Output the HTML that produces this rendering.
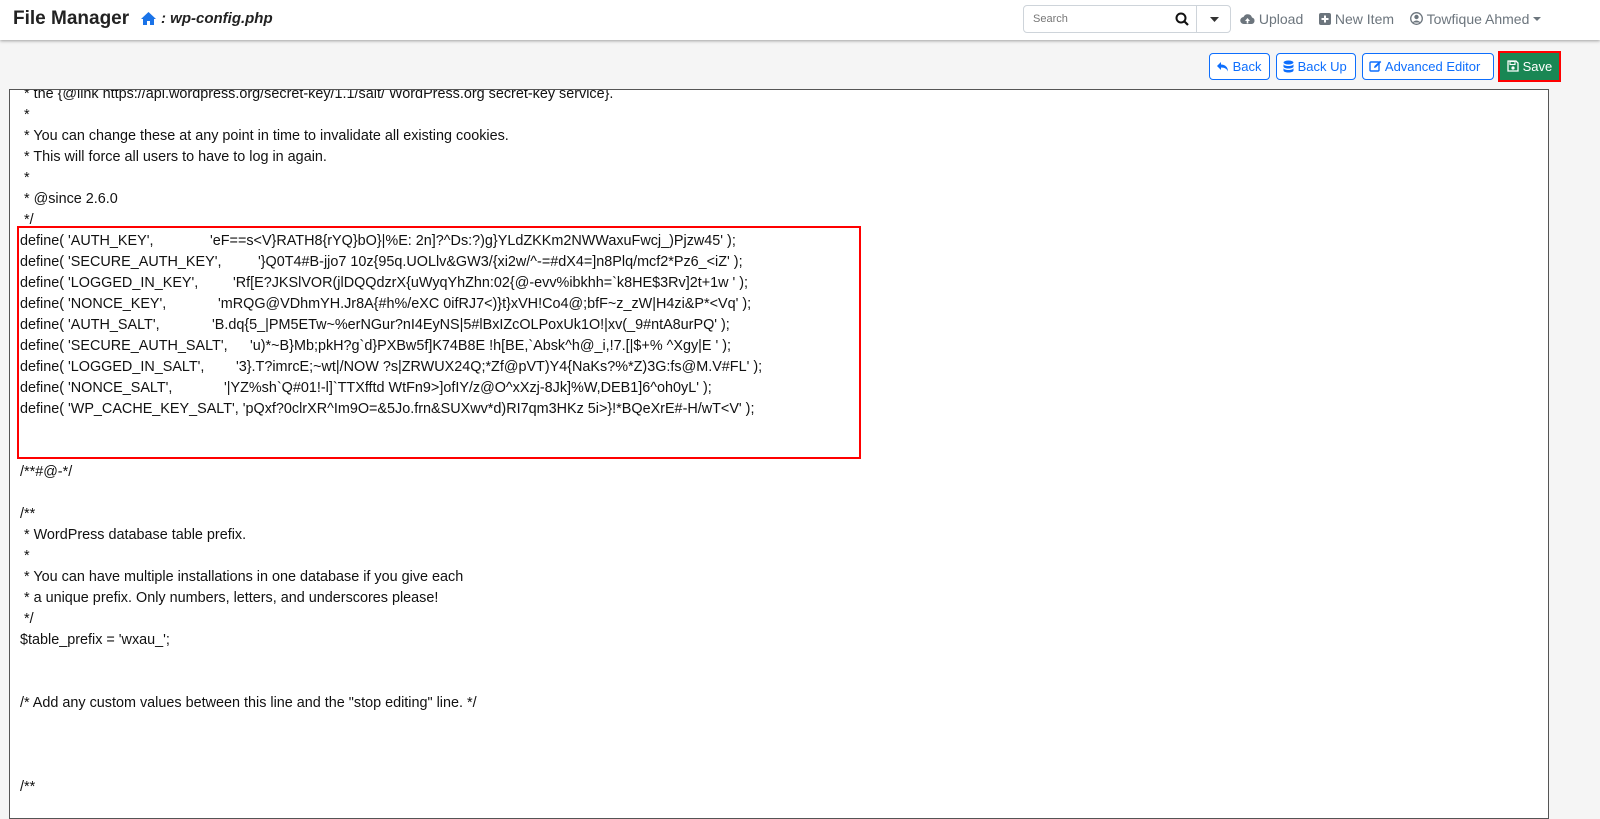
<!DOCTYPE html>
<html><head><meta charset="utf-8"><style>
*{box-sizing:border-box;margin:0;padding:0}
body{width:1600px;height:808px;overflow:hidden;background:#f5f5f5;font-family:"Liberation Sans",Arial,sans-serif;color:#212529;position:relative}
.hdr{position:absolute;left:0;top:0;width:1600px;height:40px;background:#fff;box-shadow:0 1px 3px rgba(0,0,0,.35)}
.title{position:absolute;left:13px;top:8px;font-size:19px;font-weight:bold;color:#222}
.crumb{position:absolute;left:140px;top:10px;font-size:15px;font-weight:bold;font-style:italic;color:#222}
.search{position:absolute;left:1023px;top:5px;width:208px;height:28px;border:1px solid #ced4da;border-radius:4px;background:#fff}
.search span{position:absolute;left:9px;top:7px;font-size:11px;color:#777}
.search .sep{position:absolute;left:172px;top:0;width:1px;height:26px;background:#ced4da}
.nav{position:absolute;top:11px;font-size:14px;color:#6c757d}
.btn{position:absolute;top:53px;height:27px;border:1px solid #0d6efd;border-radius:4px;background:#fff;color:#0d6efd;font-size:13px;line-height:25px;padding-left:6px}
.ta{position:absolute;left:9px;top:89px;width:1540px;height:730px;border:1px solid #555;background:#fff;overflow:hidden}
.code{position:absolute;left:10px;top:-27px;font-size:14.4px;line-height:21px;white-space:pre;color:#111}
.k{display:inline-block}
.red{position:absolute;left:17px;top:226px;width:844px;height:233px;border:2px solid #f00}
</style></head><body>
<div class="hdr">
<div class="title">File Manager</div>
<svg style="position:absolute;left:140px;top:11px" width="17" height="15" viewBox="0 0 17 15"><path d="M8.5 1 L1 8 L3 8 L3 14 L7 14 L7 10 L10 10 L10 14 L14 14 L14 8 L16 8 Z" fill="#1a73e8"/></svg>
<div class="crumb" style="left:161px">: wp-config.php</div>
<div class="search"><span>Search</span>
<svg style="position:absolute;left:151px;top:6px" width="14" height="14" viewBox="0 0 14 14"><circle cx="6" cy="6" r="4.5" fill="none" stroke="#111" stroke-width="2"/><path d="M9 9 L13 13" stroke="#111" stroke-width="2.2"/></svg>
<div class="sep"></div>
<svg style="position:absolute;left:186px;top:11px" width="9" height="5"><path d="M0 0 L9 0 L4.5 5Z" fill="#333"/></svg></div>
<div class="nav" style="left:1240px"><svg width="15" height="12" viewBox="0 0 15 12" style="vertical-align:-1px"><path d="M4 11 A3.5 3.5 0 0 1 3.5 4 A4.5 4.5 0 0 1 12 4.5 A3.3 3.3 0 0 1 11.5 11Z" fill="#6c757d"/><path d="M7.5 5 L5 8 L10 8Z M6.7 8 h1.6 v2.5 h-1.6z" fill="#fff"/></svg> Upload</div>
<div class="nav" style="left:1319px"><svg width="12" height="12" style="vertical-align:-1px"><rect width="12" height="12" rx="2" fill="#6c757d"/><path d="M6 2.5v7M2.5 6h7" stroke="#fff" stroke-width="2"/></svg> New Item</div>
<div class="nav" style="left:1410px"><svg width="13" height="13" style="vertical-align:-1px"><circle cx="6.5" cy="6.5" r="5.8" fill="none" stroke="#6c757d" stroke-width="1.3"/><circle cx="6.5" cy="5" r="2.2" fill="#6c757d"/><path d="M2.5 10.5 Q6.5 6.5 10.5 10.5" fill="#6c757d"/></svg> Towfique Ahmed <svg width="8" height="5" style="vertical-align:2px"><path d="M0 0L8 0L4 4Z" fill="#6c757d"/></svg></div>
</div>
<div class="btn" style="left:1209px;width:61px"><svg width="13" height="11" viewBox="0 0 13 11" style="vertical-align:-1px"><path d="M5 1 L1 5 L5 9 V6.5 C9 6.5 11 8 12 10.5 C12 6 9 3.5 5 3.5Z" fill="#0d6efd"/></svg> Back</div>
<div class="btn" style="left:1276px;width:80px"><svg width="11" height="13" viewBox="0 0 11 13" style="vertical-align:-2px"><ellipse cx="5.5" cy="2.5" rx="5" ry="2" fill="#0d6efd"/><path d="M0.5 4v2.5c0 1.2 2.2 2 5 2s5-.8 5-2V4c0 1.2-2.2 2-5 2s-5-.8-5-2zM0.5 8v2.5c0 1.2 2.2 2 5 2s5-.8 5-2V8c0 1.2-2.2 2-5 2s-5-.8-5-2z" fill="#0d6efd"/></svg> Back Up</div>
<div class="btn" style="left:1362px;width:132px"><svg width="13" height="12" viewBox="0 0 13 12" style="vertical-align:-1px"><rect x="1" y="2" width="9" height="9" rx="1" fill="none" stroke="#0d6efd" stroke-width="1.4"/><path d="M5 8 L5.5 6 L11 0.7 L12.3 2 L6.8 7.5Z" fill="#0d6efd"/></svg> Advanced Editor</div>
<div style="position:absolute;left:1498px;top:51px;width:63px;height:31px;background:#198754;border:2px solid #f00;color:#fff;font-size:13px;line-height:27px;padding-left:7px"><svg width="12" height="12" viewBox="0 0 12 12" style="vertical-align:-1px"><path d="M1 1h8l2 2v8H1z" fill="none" stroke="#fff" stroke-width="1.3"/><rect x="3" y="1.5" width="5" height="3" fill="none" stroke="#fff" stroke-width="1.1"/><circle cx="6" cy="8" r="1.6" fill="#fff"/></svg> Save</div>
<div class="ta"><div class="code"><span>
 * the {@link https://api.wordpress.org/secret-key/1.1/salt/ WordPress.org secret-key service}.
 *
 * You can change these at any point in time to invalidate all existing cookies.
 * This will force all users to have to log in again.
 *
 * @since 2.6.0
 */
<span class="k" style="width:190px">define( 'AUTH_KEY',</span>'eF==s&lt;V}RATH8{rYQ}bO}|%E: 2n]?^Ds:?)g}YLdZKKm2NWWaxuFwcj_)Pjzw45' );
<span class="k" style="width:238px">define( 'SECURE_AUTH_KEY',</span>'}Q0T4#B-jjo7 10z{95q.UOLlv&amp;GW3/{xi2w/^-=#dX4=]n8Plq/mcf2*Pz6_&lt;iZ' );
<span class="k" style="width:213px">define( 'LOGGED_IN_KEY',</span>'Rf[E?JKSlVOR(jlDQQdzrX{uWyqYhZhn:02{@-evv%ibkhh=`k8HE$3Rv]2t+1w ' );
<span class="k" style="width:198px">define( 'NONCE_KEY',</span>'mRQG@VDhmYH.Jr8A{#h%/eXC 0ifRJ7&lt;)}t}xVH!Co4@;bfF~z_zW|H4zi&amp;P*&lt;Vq' );
<span class="k" style="width:192px">define( 'AUTH_SALT',</span>'B.dq{5_|PM5ETw~%erNGur?nI4EyNS|5#lBxIZcOLPoxUk1O!|xv(_9#ntA8urPQ' );
<span class="k" style="width:230px">define( 'SECURE_AUTH_SALT',</span>'u)*~B}Mb;pkH?g`d}PXBw5f]K74B8E !h[BE,`Absk^h@_i,!7.[|$+% ^Xgy|E ' );
<span class="k" style="width:216px">define( 'LOGGED_IN_SALT',</span>'3}.T?imrcE;~wt|/NOW ?s|ZRWUX24Q;*Zf@pVT)Y4{NaKs?%*Z)3G:fs@M.V#FL' );
<span class="k" style="width:204px">define( 'NONCE_SALT',</span>'|YZ%sh`Q#01!-l]`TTXfftd WtFn9&gt;]ofIY/z@O^xXzj-8Jk]%W,DEB1]6^oh0yL' );
define( 'WP_CACHE_KEY_SALT', 'pQxf?0clrXR^Im9O=&amp;5Jo.frn&amp;SUXwv*d)RI7qm3HKz 5i&gt;}!*BQeXrE#-H/wT&lt;V' );


/**#@-*/

/**
 * WordPress database table prefix.
 *
 * You can have multiple installations in one database if you give each
 * a unique prefix. Only numbers, letters, and underscores please!
 */
$table_prefix = 'wxau_';


/* Add any custom values between this line and the "stop editing" line. */



/**
</span></div></div>
<div class="red"></div>
</body></html>
